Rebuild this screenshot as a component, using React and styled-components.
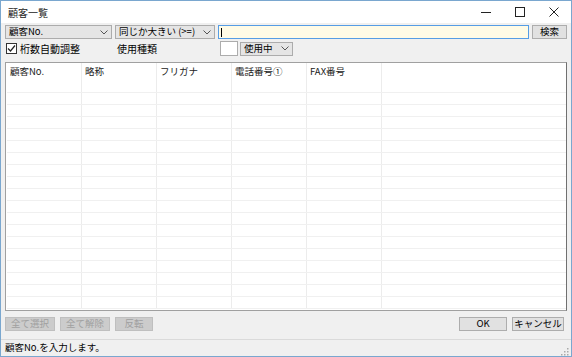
import React from "react";
import styled, { createGlobalStyle } from "styled-components";

const GlobalStyle = createGlobalStyle`
  html, body { margin: 0; padding: 0; }
  body {
    background: #ffffff;
    font-family: "Noto Sans CJK JP", "Noto Sans", sans-serif;
    font-size: 10px;
    color: #000;
  }
`;

const columns = ["顧客No.", "略称", "フリガナ", "電話番号①", "FAX番号"];
const rows = Array.from({ length: 18 });

function Chevron() {
  return (
    <svg width="8" height="5" viewBox="0 0 8 5">
      <path d="M0.5 0.5 L4 4 L7.5 0.5" fill="none" stroke="#555" strokeWidth="1" />
    </svg>
  );
}

export default function App() {
  return (
    <>
      <GlobalStyle />
      <Window>
        <TitleBar>
          <Title>顧客一覧</Title>
          <Controls>
            <Ctrl>
              <svg width="10" height="10" viewBox="0 0 10 10">
                <path d="M0 5.5 H10" stroke="#222" strokeWidth="1" />
              </svg>
            </Ctrl>
            <Ctrl>
              <svg width="10" height="10" viewBox="0 0 10 10">
                <rect x="0.5" y="0.5" width="9" height="9" fill="none" stroke="#222" strokeWidth="1" />
              </svg>
            </Ctrl>
            <Ctrl>
              <svg width="10" height="10" viewBox="0 0 10 10">
                <path d="M0.5 0.5 L9.5 9.5 M9.5 0.5 L0.5 9.5" stroke="#222" strokeWidth="1" />
              </svg>
            </Ctrl>
          </Controls>
        </TitleBar>
        <Body>
          <SearchRow>
            <Combo $w={107}>
              <span>顧客No.</span>
              <Chevron />
            </Combo>
            <Combo $w={100}>
              <span>同じか大きい (&gt;=)</span>
              <Chevron />
            </Combo>
            <SearchInput>
              <Caret />
            </SearchInput>
            <Button $w={35}>検索</Button>
          </SearchRow>
          <OptionRow>
            <CheckLabel>
              <CheckBox>
                <svg width="9" height="9" viewBox="0 0 9 9">
                  <path d="M1 4.5 L3.5 7 L8 1.5" fill="none" stroke="#222" strokeWidth="1.2" />
                </svg>
              </CheckBox>
              桁数自動調整
            </CheckLabel>
            <Label>使用種類</Label>
            <ColorBox />
            <Combo $w={53}>
              <span>使用中</span>
              <Chevron />
            </Combo>
          </OptionRow>
          <Grid>
            <HeaderRow>
              {columns.map((c) => (
                <HeadCell key={c}>{c}</HeadCell>
              ))}
              <Filler />
            </HeaderRow>
            {rows.map((_, i) => (
              <Row key={i}>
                {columns.map((c) => (
                  <Cell key={c} />
                ))}
                <Filler />
              </Row>
            ))}
          </Grid>
          <ButtonRow>
            <Group>
              <Button $w={50} disabled>全て選択</Button>
              <Button $w={50} disabled>全て解除</Button>
              <Button $w={38} disabled>反転</Button>
            </Group>
            <Group>
              <Button $w={48}>OK</Button>
              <Button $w={52}>キャンセル</Button>
            </Group>
          </ButtonRow>
        </Body>
        <StatusBar>
          <span>顧客No.を入力します。</span>
          <Grip>
            <svg width="8" height="8" viewBox="0 0 8 8">
              <g fill="#aaa">
                <rect x="6" y="0" width="1.5" height="1.5" />
                <rect x="3" y="3" width="1.5" height="1.5" />
                <rect x="6" y="3" width="1.5" height="1.5" />
                <rect x="0" y="6" width="1.5" height="1.5" />
                <rect x="3" y="6" width="1.5" height="1.5" />
                <rect x="6" y="6" width="1.5" height="1.5" />
              </g>
            </svg>
          </Grip>
        </StatusBar>
      </Window>
    </>
  );
}

const Window = styled.div`
  width: 572px;
  height: 357px;
  box-sizing: border-box;
  border: 1px solid #7aa7cf;
  background: #f0f0f0;
  display: flex;
  flex-direction: column;
`;

const TitleBar = styled.div`
  height: 22px;
  background: #ffffff;
  display: flex;
  align-items: center;
  justify-content: space-between;
  flex-shrink: 0;
`;

const Title = styled.div`
  padding-left: 7px;
  font-size: 10px;
  color: #222;
`;

const Controls = styled.div`
  display: flex;
  height: 100%;
`;

const Ctrl = styled.div`
  width: 34px;
  height: 100%;
  display: flex;
  align-items: center;
  justify-content: center;
`;

const Body = styled.div`
  flex: 1;
  display: flex;
  flex-direction: column;
  padding: 2px 4px 0 4px;
  min-height: 0;
`;

const SearchRow = styled.div`
  display: flex;
  align-items: center;
  gap: 3px;
  height: 14px;
`;

const OptionRow = styled.div`
  display: flex;
  align-items: center;
  height: 15px;
  margin-top: 2px;
`;

const Combo = styled.div`
  width: ${(p) => p.$w}px;
  height: 14px;
  box-sizing: border-box;
  border: 1px solid #acacac;
  background: #e5e5e5;
  display: flex;
  align-items: center;
  justify-content: space-between;
  padding: 0 3px 0 3px;
  font-size: 9.5px;
  line-height: 1;
  white-space: nowrap;
  flex-shrink: 0;
`;

const SearchInput = styled.div`
  flex: 1;
  height: 14px;
  box-sizing: border-box;
  border: 1px solid #569de5;
  background: #fffbe6;
  display: flex;
  align-items: center;
  padding-left: 2px;
`;

const Caret = styled.div`
  width: 1px;
  height: 9px;
  background: #000;
`;

const Button = styled.div`
  width: ${(p) => p.$w}px;
  height: 14px;
  box-sizing: border-box;
  border: 1px solid ${(p) => (p.disabled ? "#bfbfbf" : "#adadad")};
  background: ${(p) => (p.disabled ? "#cccccc" : "#e1e1e1")};
  color: ${(p) => (p.disabled ? "#a0a0a0" : "#000")};
  display: flex;
  align-items: center;
  justify-content: center;
  font-size: 9.5px;
  line-height: 1;
  white-space: nowrap;
  flex-shrink: 0;
`;

const CheckLabel = styled.div`
  display: flex;
  align-items: center;
  gap: 3px;
  width: 111px;
  font-size: 10px;
  line-height: 1;
  padding-left: 1px;
`;

const CheckBox = styled.div`
  width: 9px;
  height: 9px;
  border: 1px solid #333;
  background: #fff;
  display: flex;
  align-items: center;
  justify-content: center;
`;

const Label = styled.div`
  width: 103px;
  font-size: 10px;
  line-height: 1;
`;

const ColorBox = styled.div`
  width: 18px;
  height: 15px;
  box-sizing: border-box;
  border: 1px solid #acacac;
  background: #fff;
  margin-right: 2px;
`;

const Grid = styled.div`
  margin-top: 6px;
  height: 249px;
  box-sizing: border-box;
  border: 1px solid #a0a0a0;
  border-right-color: #707070;
  background: #fff;
  overflow: hidden;
  padding-left: 1px;
`;

const HeaderRow = styled.div`
  display: flex;
  height: 29px;
  border-bottom: 1px solid #f0f0f0;
`;

const Row = styled.div`
  display: flex;
  height: 11px;
  border-bottom: 1px solid #f0f0f0;
`;

const HeadCell = styled.div`
  width: 75px;
  flex-shrink: 0;
  box-sizing: border-box;
  border-right: 1px solid #ececec;
  padding: 4px 0 0 3px;
  font-size: 9.5px;
  line-height: 1;
  color: #222;
  white-space: nowrap;
`;

const Cell = styled.div`
  width: 75px;
  flex-shrink: 0;
  box-sizing: border-box;
  border-right: 1px solid #ececec;
`;

const Filler = styled.div`
  flex: 1;
`;

const ButtonRow = styled.div`
  display: flex;
  justify-content: space-between;
  margin-top: 6px;
  height: 14px;
  padding-right: 3px;
`;

const Group = styled.div`
  display: flex;
  gap: 5px;
`;

const StatusBar = styled.div`
  margin-top: auto;
  height: 16px;
  border-top: 1px solid #dadada;
  display: flex;
  align-items: center;
  justify-content: space-between;
  padding-left: 4px;
  font-size: 9.5px;
  line-height: 1;
  flex-shrink: 0;
`;

const Grip = styled.div`
  width: 10px;
  height: 100%;
  display: flex;
  align-items: flex-end;
  padding-bottom: 1px;
`;
